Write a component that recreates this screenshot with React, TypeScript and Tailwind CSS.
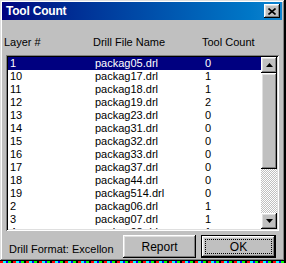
import React from "react";

const rows = [
  { layer: "1", file: "packag05.drl", count: "0" },
  { layer: "10", file: "packag17.drl", count: "1" },
  { layer: "11", file: "packag18.drl", count: "1" },
  { layer: "12", file: "packag19.drl", count: "2" },
  { layer: "13", file: "packag23.drl", count: "0" },
  { layer: "14", file: "packag31.drl", count: "0" },
  { layer: "15", file: "packag32.drl", count: "0" },
  { layer: "16", file: "packag33.drl", count: "0" },
  { layer: "17", file: "packag37.drl", count: "0" },
  { layer: "18", file: "packag44.drl", count: "0" },
  { layer: "19", file: "packag514.drl", count: "0" },
  { layer: "2", file: "packag06.drl", count: "1" },
  { layer: "3", file: "packag07.drl", count: "1" },
  { layer: "4", file: "packag08.drl", count: "1" },
];

const raised =
  "shadow-[inset_-1px_-1px_#000,inset_1px_1px_#fff,inset_-2px_-2px_#808080,inset_2px_2px_#dfdfdf]";

function Arrow({ up }: { up?: boolean }) {
  return (
    <svg width="7" height="4" viewBox="0 0 7 4">
      <path d={up ? "M3.5 0 L7 4 L0 4 Z" : "M0 0 L7 0 L3.5 4 Z"} fill="#000" />
    </svg>
  );
}

export default function App() {
  return (
    <div className="w-[286px] h-[263px] bg-[repeating-linear-gradient(90deg,#ff0000_0_3px,#00ffff_3px_6px,#0000ff_6px_8px,#00ff00_8px_11px,#000_11px_13px)] font-['Liberation_Sans',Arial,sans-serif] text-[11px] text-black">
      <div className="w-[285px] h-[261px] bg-[#c0c0c0] shadow-[inset_-1px_-1px_#000,inset_1px_1px_#dfdfdf,inset_-2px_-2px_#808080,inset_2px_2px_#fff] flex flex-col pl-[2px] pr-[3px] pt-[2px]">
        {/* Title bar */}
        <div className="h-[18px] shrink-0 flex items-center justify-between bg-gradient-to-r from-[#000080] to-[#1084d0] pl-[4px] pr-[2px]">
          <span className="text-white font-bold text-[12px] tracking-[-0.2px] leading-none">Tool Count</span>
          <div className={`w-[16px] h-[14px] bg-[#c0c0c0] flex items-center justify-center ${raised}`}>
            <svg width="8" height="7" viewBox="0 0 8 7">
              <path d="M0.5 0.5 L7.5 6.5 M7.5 0.5 L0.5 6.5" stroke="#000" strokeWidth="1.6" />
            </svg>
          </div>
        </div>

        {/* Column headers */}
        <div className="flex shrink-0 mt-[16px] pl-[2px] h-[13px] leading-[13px]">
          <span className="w-[89px]">Layer #</span>
          <span className="w-[109px]">Drill File Name</span>
          <span>Tool Count</span>
        </div>

        {/* List box */}
        <div className="mt-[6px] ml-[4px] shrink-0 w-[273px] h-[176px] bg-white p-[2px] shadow-[inset_1px_1px_#808080,inset_-1px_-1px_#fff,inset_2px_2px_#000,inset_-2px_-2px_#dfdfdf] flex">
          <div className="flex-1 overflow-hidden">
            {rows.map((r, i) => (
              <div
                key={r.layer}
                className={`flex h-[13px] leading-[13px] pl-[2px] ${i === 0 ? "bg-[#000080] text-white" : ""}`}
              >
                <span className="w-[85px]">{r.layer}</span>
                <span className="w-[110px]">{r.file}</span>
                <span>{r.count}</span>
              </div>
            ))}
          </div>
          {/* Scrollbar */}
          <div className="w-[16px] flex flex-col">
            <div className={`h-[16px] bg-[#c0c0c0] flex items-center justify-center ${raised}`}>
              <Arrow up />
            </div>
            <div className={`h-[96px] bg-[#c0c0c0] ${raised}`} />
            <div className="flex-1 bg-[repeating-conic-gradient(#c0c0c0_0%_25%,#fff_0%_50%)] bg-[length:2px_2px]" />
            <div className={`h-[16px] bg-[#c0c0c0] flex items-center justify-center ${raised}`}>
              <Arrow />
            </div>
          </div>
        </div>

        {/* Footer */}
        <div className="flex shrink-0 mt-[4px] ml-[7px]">
          <div className="flex items-end pb-[2px] w-[114px] leading-[13px]">
            <span className="w-[63px]">Drill Format:</span>
            <span>Excellon</span>
          </div>
          <button className={`w-[73px] h-[23px] bg-[#c0c0c0] text-[12px] ${raised}`}>Report</button>
          <button className="ml-[5px] w-[75px] h-[23px] bg-[#c0c0c0] border border-black p-0">
            <div className="w-full h-full shadow-[inset_-1px_-1px_#000,inset_1px_1px_#fff,inset_-2px_-2px_#808080,inset_2px_2px_#dfdfdf] p-[3px]">
              <div className="w-full h-full border border-dotted border-black flex items-center justify-center text-[12px]">
                OK
              </div>
            </div>
          </button>
        </div>
      </div>
    </div>
  );
}
